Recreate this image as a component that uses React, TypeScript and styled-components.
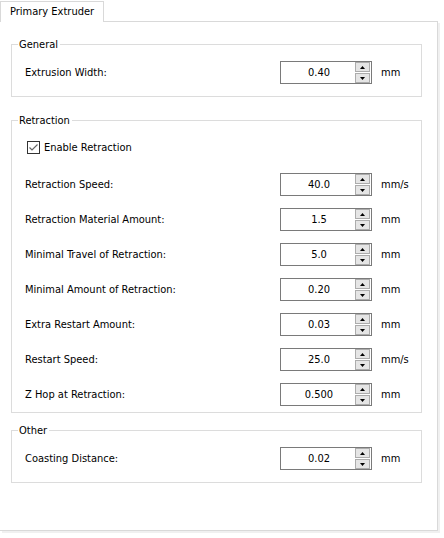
import React from "react";
import styled, { createGlobalStyle } from "styled-components";

const Global = createGlobalStyle`
  html, body { margin: 0; padding: 0; background: #ffffff; }
  body { font-family: "DejaVu Sans Condensed", "Liberation Sans", sans-serif; font-size: 11px; color: #000; }
`;

const Window = styled.div`
  width: 444px;
  height: 538px;
  background: #ffffff;
  padding-top: 1px;
  box-sizing: border-box;
`;

const TabBar = styled.div`
  display: flex;
  height: 20px;
`;

const Tab = styled.div`
  box-sizing: border-box;
  width: 104px;
  height: 21px;
  border: 1px solid #d9d9d9;
  border-bottom: none;
  background: #ffffff;
  padding: 3px 0 0 9px;
  position: relative;
  z-index: 1;
  line-height: 14px;
  white-space: nowrap;
`;

const Pane = styled.div`
  box-sizing: border-box;
  width: 438px;
  height: 510px;
  border: 1px solid #d9d9d9;
  border-left: none;
  background: #ffffff;
  box-shadow: 2px 2px 0 #f0f0f0;
  padding: 16px 0 0 11px;
  display: flex;
  flex-direction: column;
`;

const Group = styled.fieldset<{ $pb: number; $mt: number }>`
  box-sizing: border-box;
  width: 411px;
  margin: ${(p) => p.$mt}px 0 0 0;
  border: 1px solid #dcdcdc;
  padding: 10px 0 ${(p) => p.$pb}px 13px;
  display: flex;
  flex-direction: column;
  gap: 12px;
`;

const Legend = styled.legend`
  padding: 0 2px 0 1px;
  margin-left: -7px;
  line-height: 13px;
  font-size: 11px;
`;

const Row = styled.div`
  display: grid;
  grid-template-columns: 246px 92px auto;
  column-gap: 9px;
  align-items: center;
  height: 23px;
`;

const Label = styled.span`
  white-space: nowrap;
`;

const Spin = styled.div`
  box-sizing: border-box;
  width: 92px;
  height: 23px;
  border: 1px solid #7a7a7a;
  display: flex;
  align-items: center;
  padding-right: 1px;
`;

const Value = styled.span`
  flex: 1;
  text-align: center;
  padding-left: 2px;
`;

const Buttons = styled.div`
  display: flex;
  flex-direction: column;
  gap: 1px;
`;

const SpinBtn = styled.div`
  box-sizing: border-box;
  width: 15px;
  height: 10px;
  background: #e5e5e5;
  border: 1px solid #acacac;
  display: flex;
  align-items: center;
  justify-content: center;
`;

const Unit = styled.span``;

const CheckRow = styled.label`
  display: flex;
  align-items: center;
  gap: 4px;
  height: 13px;
  margin: 4px 0 7px 2px;
`;

const Box = styled.span`
  box-sizing: border-box;
  width: 13px;
  height: 13px;
  border: 1px solid #333333;
  background: #fff;
  display: flex;
  align-items: center;
  justify-content: center;
`;

const Up = () => (
  <svg width="5" height="3" viewBox="0 0 5 3"><path d="M0 3 L2.5 0 L5 3 Z" fill="#000" /></svg>
);
const Down = () => (
  <svg width="5" height="3" viewBox="0 0 5 3"><path d="M0 0 L2.5 3 L5 0 Z" fill="#000" /></svg>
);

const Field = ({ label, value, unit }: { label: string; value: string; unit: string }) => (
  <Row>
    <Label>{label}</Label>
    <Spin>
      <Value>{value}</Value>
      <Buttons>
        <SpinBtn><Up /></SpinBtn>
        <SpinBtn><Down /></SpinBtn>
      </Buttons>
    </Spin>
    <Unit>{unit}</Unit>
  </Row>
);

const retraction = [
  ["Retraction Speed:", "40.0", "mm/s"],
  ["Retraction Material Amount:", "1.5", "mm"],
  ["Minimal Travel of Retraction:", "5.0", "mm"],
  ["Minimal Amount of Retraction:", "0.20", "mm"],
  ["Extra Restart Amount:", "0.03", "mm"],
  ["Restart Speed:", "25.0", "mm/s"],
  ["Z Hop at Retraction:", "0.500", "mm"],
];

export default function App() {
  return (
    <>
      <Global />
      <Window>
        <TabBar>
          <Tab>Primary Extruder</Tab>
        </TabBar>
        <Pane>
          <Group $pb={12} $mt={0}>
            <Legend>General</Legend>
            <Field label="Extrusion Width:" value="0.40" unit="mm" />
          </Group>
          <Group $pb={6} $mt={17}>
            <Legend>Retraction</Legend>
            <CheckRow>
              <Box>
                <svg width="11" height="11" viewBox="0 0 11 11">
                  <path d="M1.5 5.5 L4 8 L9.5 2.5" stroke="#666" strokeWidth="1.2" fill="none" />
                </svg>
              </Box>
              <span>Enable Retraction</span>
            </CheckRow>
            {retraction.map(([l, v, u]) => (
              <Field key={l} label={l} value={v} unit={u} />
            ))}
          </Group>
          <Group $pb={12} $mt={11}>
            <Legend>Other</Legend>
            <Field label="Coasting Distance:" value="0.02" unit="mm" />
          </Group>
        </Pane>
      </Window>
    </>
  );
}
